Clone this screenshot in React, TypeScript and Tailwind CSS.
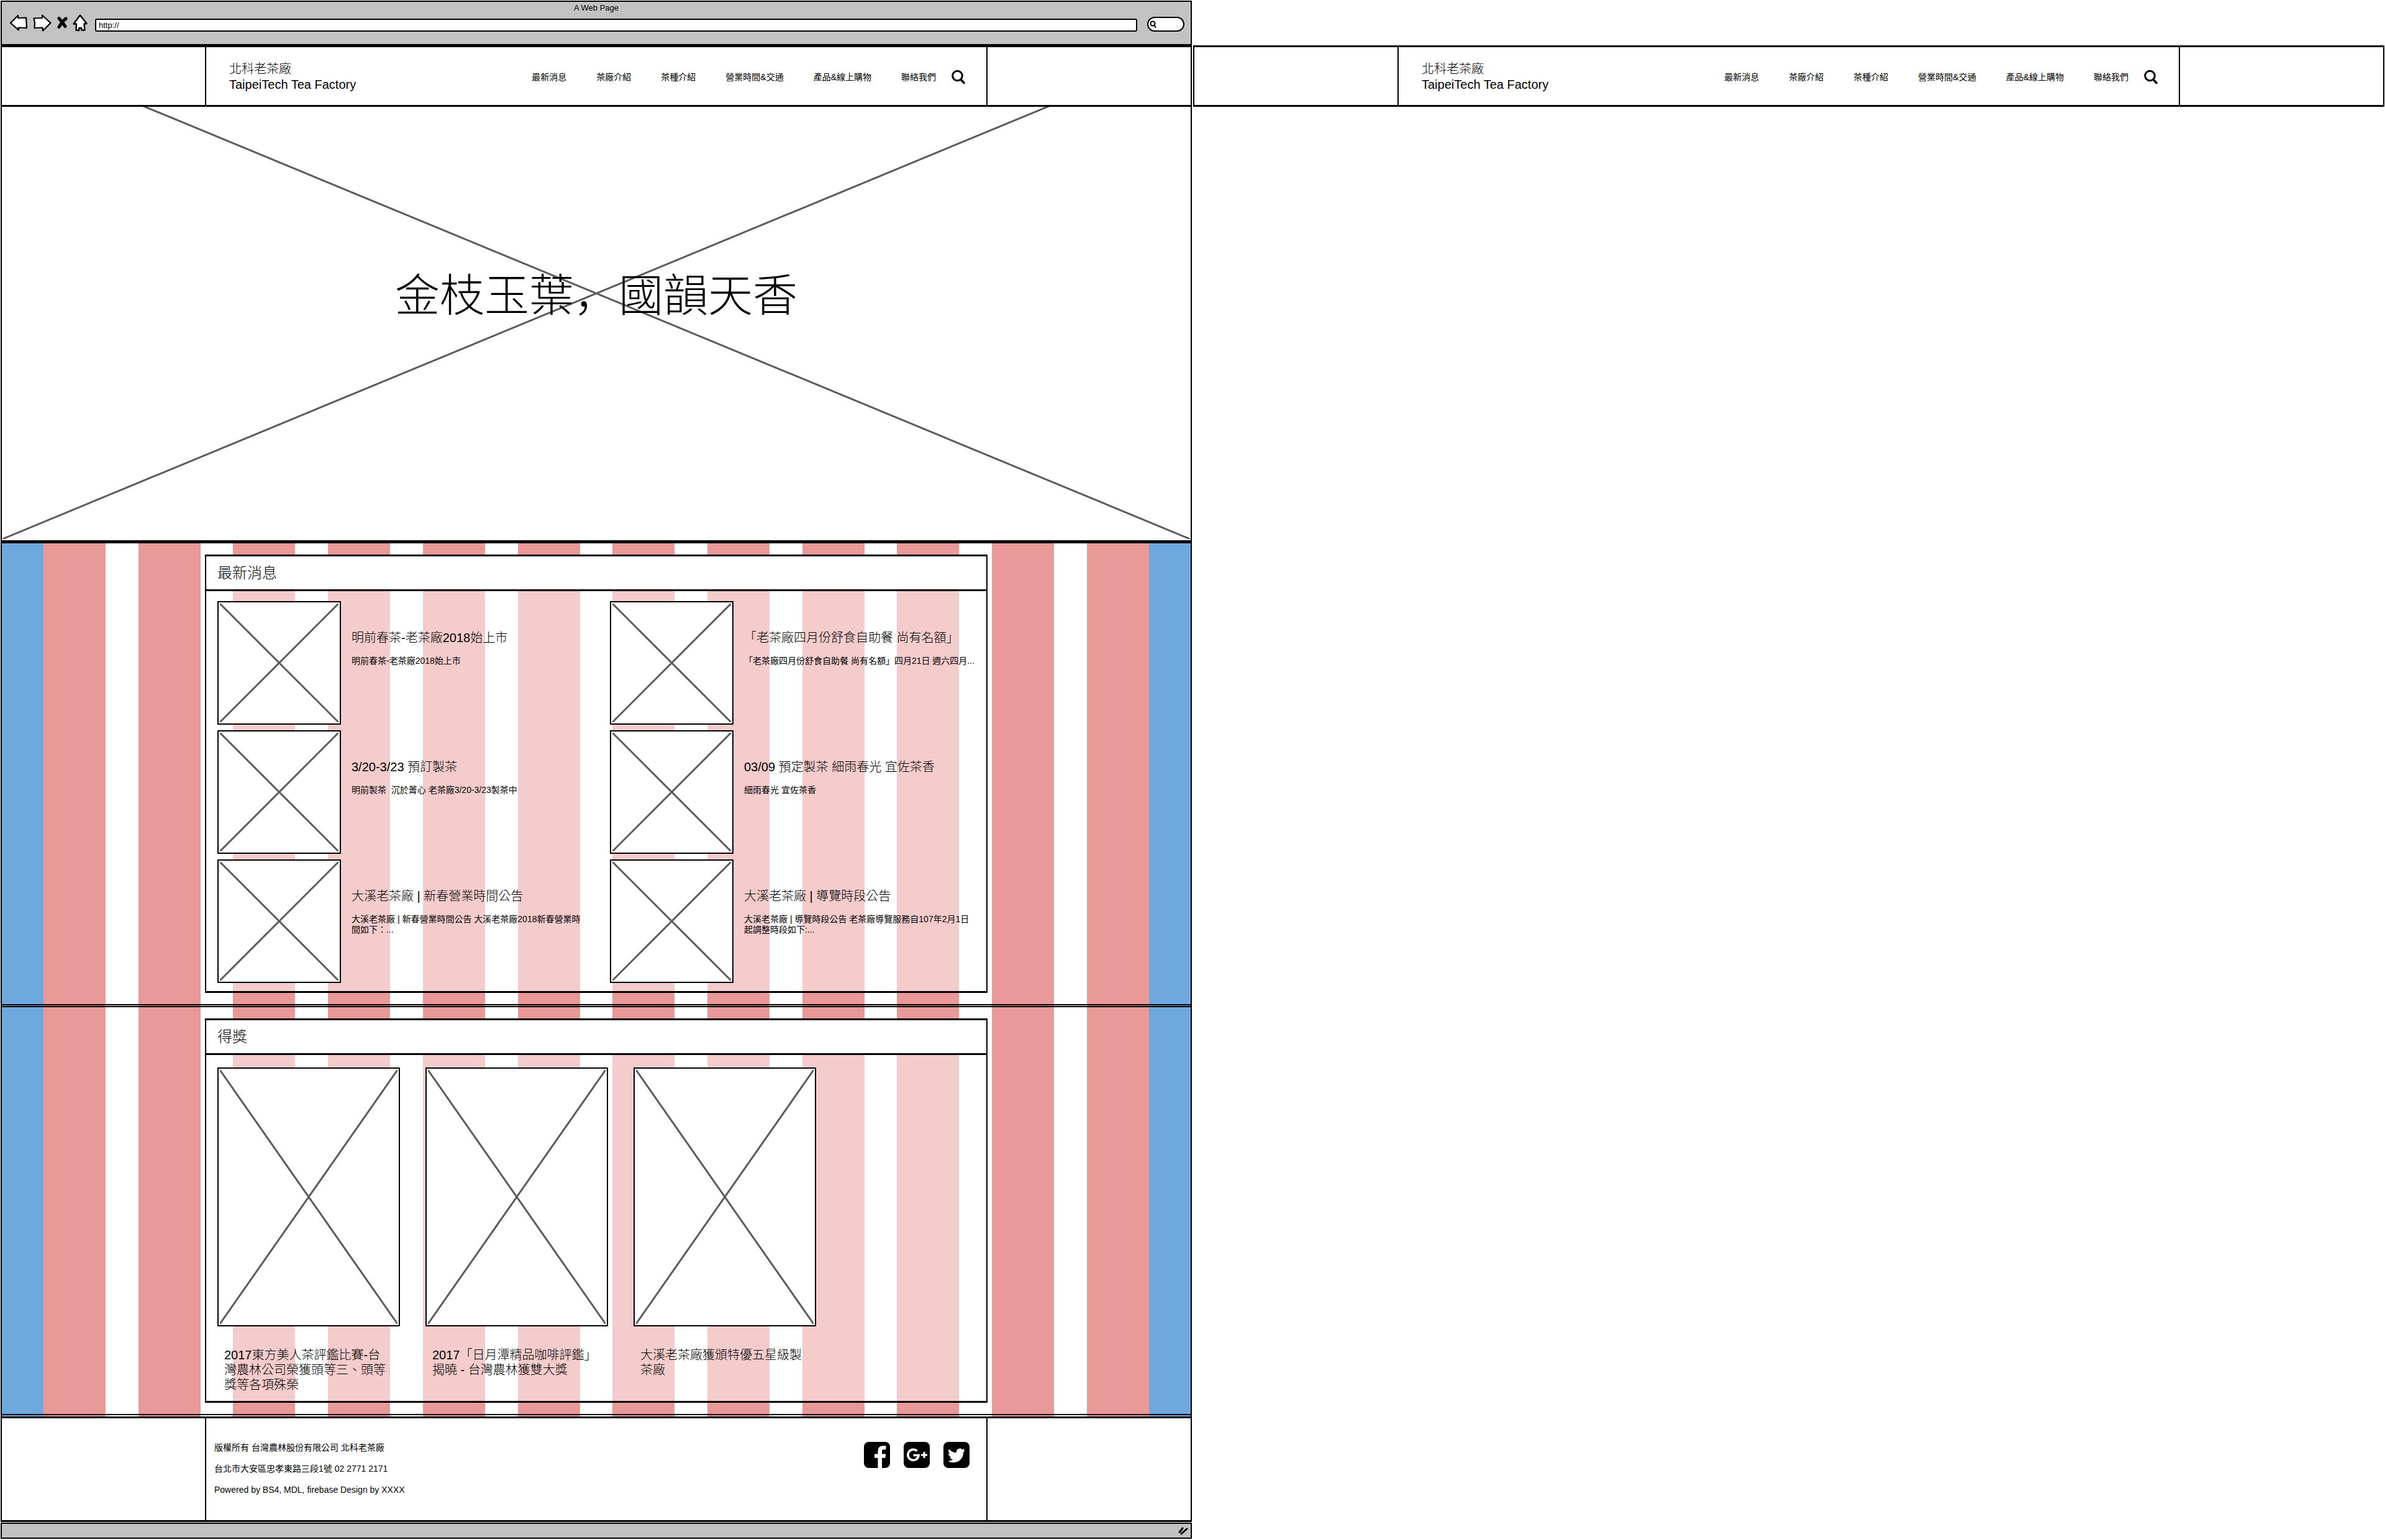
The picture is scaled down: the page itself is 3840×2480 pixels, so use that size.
import React from "react";

const NAV_ITEMS = ["最新消息", "茶廠介紹", "茶種介紹", "營業時間&交通", "產品&線上購物", "聯絡我們"];

const NEWS = [
  { title: "明前春茶-老茶廠2018始上市", body: "明前春茶-老茶廠2018始上市" },
  { title: "「老茶廠四月份舒食自助餐 尚有名額」", body: "「老茶廠四月份舒食自助餐 尚有名額」四月21日 週六四月..." },
  { title: "3/20-3/23 預訂製茶", body: "明前製茶  沉於菁心 老茶廠3/20-3/23製茶中" },
  { title: "03/09 預定製茶 細雨春光 宜佐茶香", body: "細雨春光 宜佐茶香" },
  { title: "大溪老茶廠 | 新春營業時間公告", body: "大溪老茶廠 | 新春營業時間公告 大溪老茶廠2018新春營業時間如下：..." },
  { title: "大溪老茶廠 | 導覽時段公告", body: "大溪老茶廠 | 導覽時段公告 老茶廠導覽服務自107年2月1日起調整時段如下:..." },
];

const AWARDS = [
  "2017東方美人茶評鑑比賽-台灣農林公司榮獲頭等三、頭等獎等各項殊榮",
  "2017「日月潭精品咖啡評鑑」揭曉 - 台灣農林獲雙大獎",
  "大溪老茶廠獲頒特優五星級製茶廠",
];

const STRIPES = Array.from({ length: 12 }, (_, i) => i);

function Cross({ className, weight = 3 }: { className: string; weight?: number }) {
  return (
    <svg className={className} viewBox="0 0 100 100" preserveAspectRatio="none" aria-hidden="true">
      <path
        d="M0 0 100 100M100 0 0 100"
        fill="none"
        stroke="#5b5b5b"
        strokeWidth={weight}
        strokeLinecap="round"
        vectorEffect="non-scaling-stroke"
      />
    </svg>
  );
}

function Chrome() {
  return (
    <div className="mt-px flex h-[72px] flex-col border-2 border-black bg-[#c2c2c2]">
      <div className="mt-0.5 text-center text-[13px] leading-4">A Web Page</div>
      <div className="mt-0.5 flex items-end pl-3 pr-2.5">
        <div className="flex items-center">
          <button type="button" aria-label="Back" className="mr-2">
            <svg width="30" height="28" viewBox="0 0 30 28" fill="#fff" stroke="#000" strokeWidth="2.2" strokeLinejoin="round">
              <path d="M2 14 14 2 14.500 6 27 5.500 28 22 14.500 21.500 15 25.500Z" />
            </svg>
          </button>
          <button type="button" aria-label="Forward" className="mr-2">
            <svg width="30" height="28" viewBox="0 0 30 28" fill="#fff" stroke="#000" strokeWidth="2.2" strokeLinejoin="round">
              <path d="M1.500 6.500 15 6 15 1.500 28.500 14 16 26.500 15.500 21.500 2.500 22 3 14Z" />
            </svg>
          </button>
          <button type="button" aria-label="Stop" className="mr-2">
            <svg width="18" height="22" viewBox="0 0 18 22" stroke="#000" strokeWidth="5" strokeLinecap="round">
              <path d="M4 3.500Q9 9 14 16.500M15 4Q9 9 4 17.500" fill="none" />
            </svg>
          </button>
          <button type="button" aria-label="Home" className="mr-3">
            <svg width="24" height="28" viewBox="0 0 24 28" fill="#fff" stroke="#000" strokeWidth="2.400" strokeLinejoin="round">
              <path d="M12 1.500 22.500 15 18.500 15.500 19.500 25.500 14.500 25.500 14 22 10.500 22 10 26 5.500 25.500 6 15.500 1.500 15.500Z" />
            </svg>
          </button>
        </div>
        <input
          type="text"
          aria-label="Address"
          defaultValue="http://"
          className="h-[21px] min-w-0 flex-1 rounded-[3px] border-2 border-black bg-white pl-1 text-[13px] leading-4"
        />
        <div className="relative ml-4">
          <input
            type="search"
            aria-label="Search the web"
            className="block h-6 w-[60px] rounded-[12px] border-2 border-black bg-white pl-4 text-xs"
          />
          <svg className="absolute left-1 top-1.5" width="12" height="13" viewBox="0 0 12 13" fill="none" stroke="#000" strokeWidth="2" strokeLinecap="round" aria-hidden="true">
            <circle cx="5" cy="5" r="3.500" />
            <path d="M7.500 7.500 9.500 11" />
          </svg>
        </div>
      </div>
    </div>
  );
}

function SiteHeader() {
  return (
    <header className="relative flex h-[99px] justify-center border-y-[3px] border-black bg-white">
      <div className="flex w-[1260px] max-w-full items-center border-x-2 border-black pl-[37px] pr-[33px] pt-0.5">
        <div className="text-xl font-light leading-[25px]">
          <div>北科老茶廠</div>
          <div>TaipeiTech Tea Factory</div>
        </div>
        <nav className="ml-auto flex gap-12 text-sm">
          {NAV_ITEMS.map((item) => (
            <a key={item} href="#" className="whitespace-nowrap">
              {item}
            </a>
          ))}
        </nav>
        <button type="button" aria-label="Search" className="ml-6">
          <svg width="24" height="24" viewBox="0 0 24 24" fill="none" stroke="#000" strokeLinecap="round">
            <circle cx="10.500" cy="10" r="7.800" strokeWidth="3" />
            <path d="M16 16 21 21.500" strokeWidth="3.500" />
          </svg>
        </button>
      </div>
    </header>
  );
}

function Panel({ title, children }: { title: string; children: React.ReactNode }) {
  return (
    <section className="flex justify-center border-y-2 border-black py-[18px]">
      <div className="w-[1260px] max-w-full border-x-2 border-y-[3px] border-black bg-white/50">
        <h2 className="flex h-14 items-center border-b-[3px] border-black bg-white pl-[18px] text-2xl font-light">{title}</h2>
        {children}
      </div>
    </section>
  );
}

function Stripes() {
  return (
    <div className="col-start-1 row-start-1 flex" aria-hidden="true">
      <div className="w-[67px] bg-[#6fa8dc]" />
      <div className="flex flex-1 justify-between">
        {STRIPES.map((i) => (
          <div key={i} className="w-[100px] bg-[#ea9999]" />
        ))}
      </div>
      <div className="w-[67px] bg-[#6fa8dc]" />
    </div>
  );
}

function SiteFooter() {
  return (
    <footer className="flex h-[170px] justify-center border-y-[3px] border-black bg-white">
      <div className="flex w-[1260px] max-w-full items-start justify-between border-x-2 border-black pl-[13px] pr-[27px]">
        <div className="pt-[30px] text-sm leading-[34px]">
          <p>版權所有 台灣農林股份有限公司 北科老茶廠</p>
          <p>台北市大安區忠孝東路三段1號 02 2771 2171</p>
          <p>Powered by BS4, MDL, firebase Design by XXXX</p>
        </div>
        <div className="flex gap-[22px] pt-[38px]">
          <a href="#" aria-label="Facebook">
            <svg width="42" height="42" viewBox="128 128 1536 1536">
              <path d="M1376 128q119 0 203.500 84.500t84.500 203.500v960q0 119-84.500 203.500t-203.500 84.500h-188v-595h199l30-232h-229v-148q0-56 23.500-84t91.500-28l122-1v-207q-63-9-178-9-136 0-217.500 80t-81.500 226v171h-200v232h200v595h-532q-119 0-203.500-84.500t-84.500-203.500v-960q0-119 84.500-203.500t203.500-84.500h960z" />
            </svg>
          </a>
          <a href="#" aria-label="Google Plus">
            <svg width="42" height="42" viewBox="0 0 42 42" fill="none" stroke="#fff">
              <rect width="42" height="42" rx="8" fill="#000" stroke="none" />
              <path d="M21.500 14.800A8.600 8.600 0 1 0 24 21.500H15.500" strokeWidth="3.600" />
              <path d="M33 16v10M28 21h10" strokeWidth="3" />
            </svg>
          </a>
          <a href="#" aria-label="Twitter">
            <svg width="42" height="42" viewBox="128 128 1536 1536">
              <path d="M1408 610q-56 25-121 34 68-40 93-117-65 38-134 51-61-66-153-66-87 0-148.500 61.500t-61.500 148.500q0 29 5 48-129-7-242-65t-192-155q-29 50-29 106 0 114 91 175-47-1-100-26v2q0 75 50 133.500t123 72.500q-29 8-51 8-13 0-39-4 21 63 74.500 104t121.500 42q-116 90-261 90-26 0-50-3 148 94 322 94 112 0 210-35.500t168-95 120.500-137 75-162 24.500-168.500q0-18-1-27 63-45 105-109zm256-194v960q0 119-84.500 203.500t-203.500 84.500h-960q-119 0-203.500-84.500t-84.500-203.500v-960q0-119 84.500-203.500t203.500-84.500h960q119 0 203.500 84.500t84.500 203.500z" />
            </svg>
          </a>
        </div>
      </div>
    </footer>
  );
}

export default function App() {
  return (
    <div className="grid min-h-screen grid-cols-2 items-start bg-white font-['Liberation_Sans','Noto_Sans_CJK_TC',sans-serif] text-black">
      <div className="mx-px">
        <Chrome />
        <div className="border-x-2 border-black">
          <SiteHeader />
          <div className="-mt-[99px] grid h-[800px] border-b-[3px] border-black px-px pb-0.5 pt-1">
            <Cross className="col-start-1 row-start-1 h-full w-full" weight={3} />
            <h1 className="relative col-start-1 row-start-1 place-self-center text-7xl font-light">
              金枝玉葉<span className="font-['Noto_Sans_CJK_SC',sans-serif]">，</span>國韻天香
            </h1>
          </div>
          <main className="grid">
            <Stripes />
            <div className="col-start-1 row-start-1 flex flex-col gap-px pb-0.5">
              <Panel title="最新消息">
                <div className="grid grid-cols-2 gap-x-11 gap-y-[9px] px-[18px] pb-[13px] pt-4">
                  {NEWS.map((item) => (
                    <article key={item.title} className="flex gap-[17px]">
                      <div className="size-[199px] shrink-0 border-2 border-black bg-white p-0.5">
                        <Cross className="h-full w-full" />
                      </div>
                      <div className="pt-[47px]">
                        <h3 className="text-xl font-light leading-6">{item.title}</h3>
                        <p className="mt-[17px] whitespace-pre-wrap text-sm leading-[17px]">{item.body}</p>
                      </div>
                    </article>
                  ))}
                </div>
              </Panel>
              <Panel title="得獎">
                <div className="flex gap-[41px] px-[18px] pb-3.5 pt-5">
                  {AWARDS.map((title) => (
                    <article key={title} className="w-[294px]">
                      <div className="h-[417px] border-2 border-black bg-white p-0.5">
                        <Cross className="h-full w-full" />
                      </div>
                      <h3 className="mt-[34px] pl-[11px] pr-4 text-xl font-light leading-6">{title}</h3>
                    </article>
                  ))}
                </div>
              </Panel>
            </div>
          </main>
          <SiteFooter />
        </div>
        <div className="mt-px flex h-[26px] items-center justify-end border-2 border-black bg-[#c2c2c2] pr-1">
          <svg width="16" height="14" viewBox="0 0 16 14" stroke="#000" strokeWidth="3" strokeLinecap="round" aria-hidden="true">
            <path d="M2 9.500 7 3M5 12 14 4" />
          </svg>
        </div>
      </div>
      <div className="mx-px mt-[73px] border-x-2 border-black">
        <SiteHeader />
      </div>
    </div>
  );
}
